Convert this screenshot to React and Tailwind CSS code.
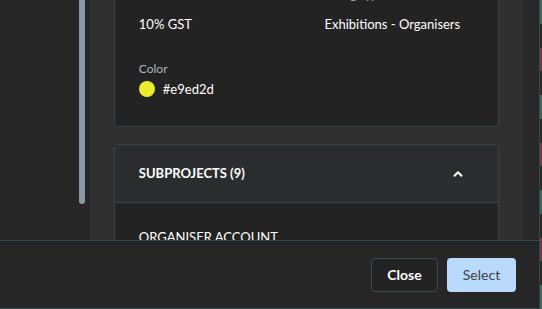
import { ChevronUp } from "lucide-react"

const FONT = { fontFamily: "Lato, 'Open Sans', sans-serif" }

function Field({ label, value }) {
  return (
    <div className="flex flex-col">
      <span className="text-[12px] leading-[18px] text-[#a9b4bd]">{label}</span>
      <span className="mt-[10px] text-[13px] leading-[20px] text-white">{value}</span>
    </div>
  )
}

function PageEdge() {
  const bits = ["#3a6b55", "#262a2c", "#6b3a4c", "#262a2c", "#3a6b55", "#262a2c", "#6b3a4c", "#262a2c", "#3a6b55", "#262a2c", "#6b3a4c", "#262a2c", "#3a6b55"]
  return (
    <div className="flex w-[2px] flex-col">
      {bits.map((color, index) => (
        <div key={index} className="flex-1" style={{ backgroundColor: color }} />
      ))}
    </div>
  )
}

export default function App() {
  return (
    <div className="flex h-[309px] w-[542px] overflow-hidden bg-[#1e2a2e]" style={FONT}>
      <div className="flex w-[540px] flex-col border-r border-b border-[#34464e] bg-[#262626]">
        <div className="flex h-[240px] overflow-hidden">
          <aside className="flex w-[90px] justify-end bg-[#262626] pr-[5px]">
            <div className="h-[204px] w-[6px] rounded-b-full bg-[#889aa6]" />
          </aside>

          <main className="flex w-[434px] flex-col gap-[17px] bg-[#2f2f2f] px-[24px]">
            <section className="-mt-[30px] flex flex-col rounded-b-[4px] border border-[#35444b] bg-[#232323] px-[24px] pt-[15px] pb-[27px]">
              <div className="grid grid-cols-2 gap-x-[34px]">
                <Field label="Tax Rate" value="10% GST" />
                <div className="pl-[1px]">
                  <Field label="Billing Type" value="Exhibitions - Organisers" />
                </div>
              </div>
              <div className="mt-[26px] flex flex-col">
                <span className="text-[12px] leading-[18px] text-[#a9b4bd]">Color</span>
                <div className="mt-[1px] flex h-[20px] items-center gap-[8px]">
                  <span className="h-[16px] w-[16px] rounded-full bg-[#e9ed2d]" />
                  <span className="text-[13px] leading-[20px] text-white">#e9ed2d</span>
                </div>
              </div>
            </section>

            <section className="rounded-t-[4px] border border-[#35444b] bg-[#232323]">
              <header className="flex h-[58px] items-center justify-between border-b border-[#35444b] bg-[#2b2c2e] pr-[33px] pl-[24px]">
                <span className="text-[13px] font-bold text-white">SUBPROJECTS (9)</span>
                <ChevronUp size={14} strokeWidth={3.5} className="text-white" />
              </header>
              <div className="px-[24px] pt-[21px]">
                <span className="text-[13px] text-white">ORGANISER ACCOUNT</span>
              </div>
            </section>
          </main>

          <div className="w-[16px] bg-[#282828]" />
        </div>

        <footer className="flex flex-1 items-center justify-end gap-[9px] border-t border-[#34464e] bg-[#262626] pr-[23px]">
          <button
            type="button"
            className="h-[34px] w-[67px] rounded-[4px] border border-[#3a4a52] bg-[#232323] text-[14px] font-bold text-white"
          >
            Close
          </button>
          <button
            type="button"
            className="h-[34px] w-[69px] rounded-[4px] bg-[#b9dafc] text-[14px] text-[#3c4148]"
          >
            Select
          </button>
        </footer>
      </div>
      <PageEdge />
    </div>
  )
}
